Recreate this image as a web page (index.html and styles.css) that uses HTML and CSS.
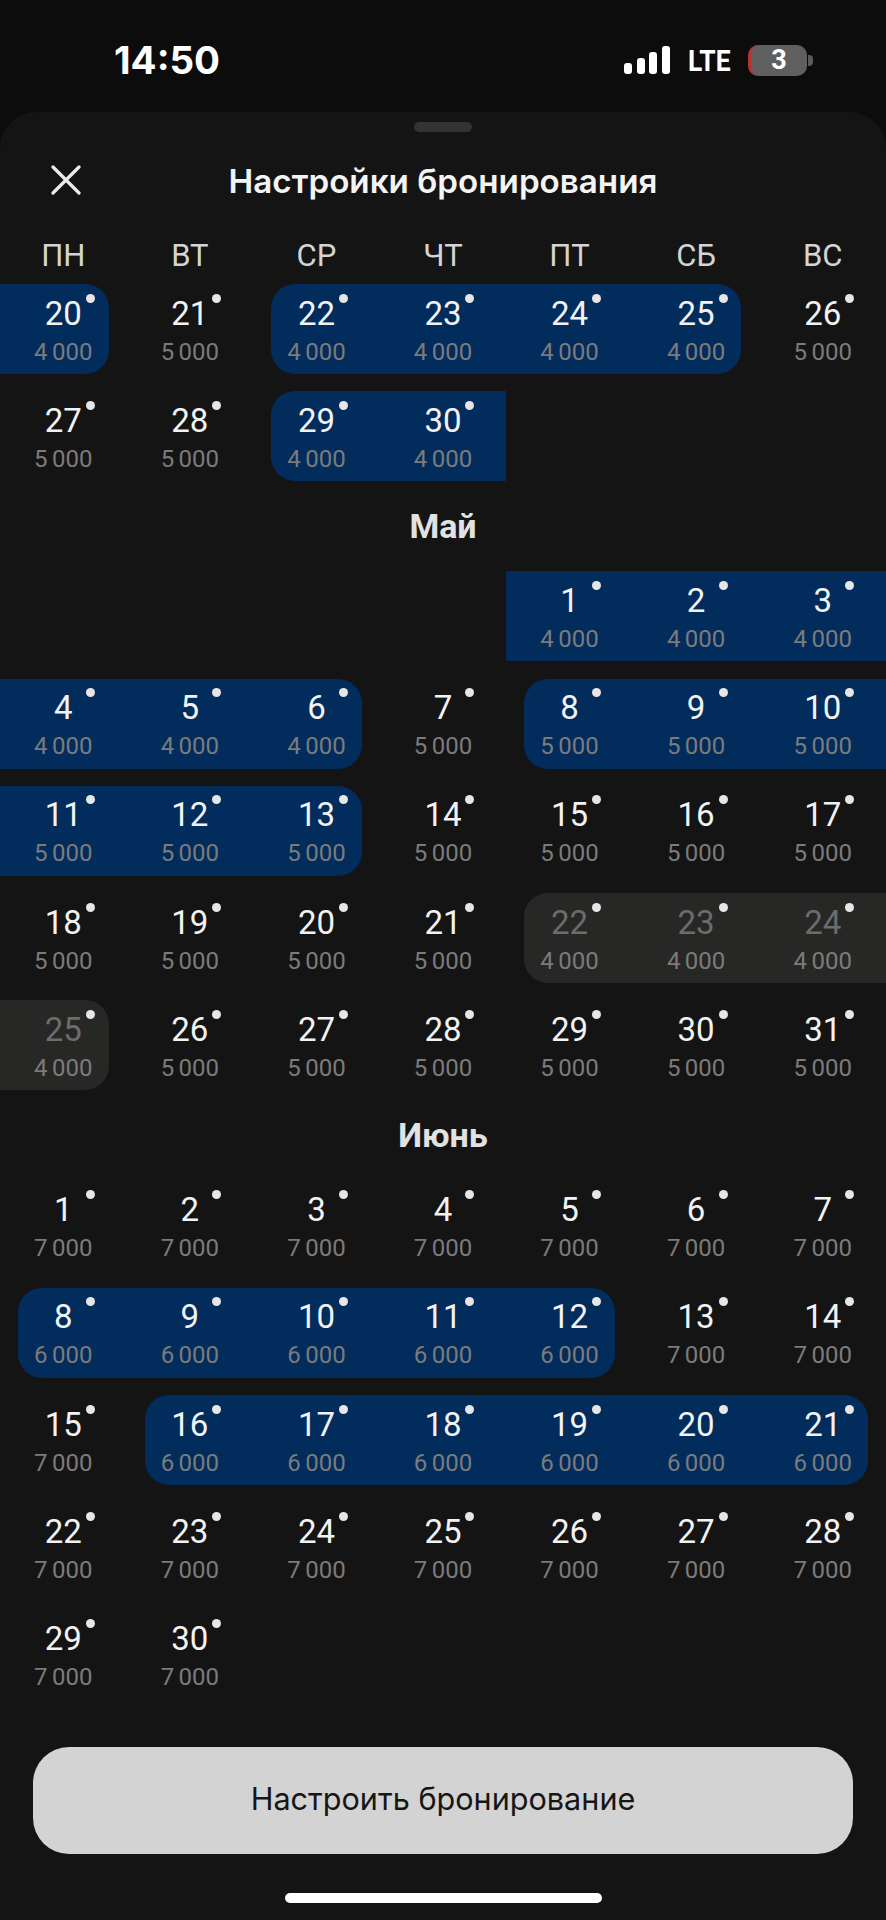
FILE: index.html
```html
<!DOCTYPE html>
<html lang="ru">
<head>
  <meta charset="UTF-8"/>
  <meta name="viewport" content="width=device-width, initial-scale=1.0"/>
  <title>Настройки бронирования</title>
  <link rel="stylesheet" href="styles.css">
</head>
<body>
  <div class="status-bar">
    <div class="time">14:50</div>
    <div class="status-right">
      <div class="signal"><i></i><i></i><i></i><i></i></div>
      <div class="lte">LTE</div>
      <div class="battery"><span>3</span></div>
      <div class="battery-nub"></div>
    </div>
  </div>

  <div class="sheet">
    <div class="handle"></div>

    <div class="sheet-head">
      <svg class="close" width="30" height="30" viewBox="0 0 30 30">
        <path d="M2 2 L28 28 M28 2 L2 28" stroke="#ececec" stroke-width="3.2" fill="none" stroke-linecap="round"/>
      </svg>
      <h1>Настройки бронирования</h1>
    </div>

    <div class="weekdays">
      <div>ПН</div><div>ВТ</div><div>СР</div><div>ЧТ</div><div>ПТ</div><div>СБ</div><div>ВС</div>
    </div>

    <!-- Апрель -->
    <div class="month">
      <div class="cell sel end"><span class="day">20</span><span class="price">4 000</span></div>
      <div class="cell"><span class="day">21</span><span class="price">5 000</span></div>
      <div class="cell sel start"><span class="day">22</span><span class="price">4 000</span></div>
      <div class="cell sel"><span class="day">23</span><span class="price">4 000</span></div>
      <div class="cell sel"><span class="day">24</span><span class="price">4 000</span></div>
      <div class="cell sel end"><span class="day">25</span><span class="price">4 000</span></div>
      <div class="cell"><span class="day">26</span><span class="price">5 000</span></div>
      <div class="cell"><span class="day">27</span><span class="price">5 000</span></div>
      <div class="cell"><span class="day">28</span><span class="price">5 000</span></div>
      <div class="cell sel start"><span class="day">29</span><span class="price">4 000</span></div>
      <div class="cell sel"><span class="day">30</span><span class="price">4 000</span></div>
    </div>

    <h2>Май</h2>
    <div class="month">
      <div class="cell sel from-fri"><span class="day">1</span><span class="price">4 000</span></div>
      <div class="cell sel"><span class="day">2</span><span class="price">4 000</span></div>
      <div class="cell sel"><span class="day">3</span><span class="price">4 000</span></div>
      <div class="cell sel"><span class="day">4</span><span class="price">4 000</span></div>
      <div class="cell sel"><span class="day">5</span><span class="price">4 000</span></div>
      <div class="cell sel end"><span class="day">6</span><span class="price">4 000</span></div>
      <div class="cell"><span class="day">7</span><span class="price">5 000</span></div>
      <div class="cell sel start"><span class="day">8</span><span class="price">5 000</span></div>
      <div class="cell sel"><span class="day">9</span><span class="price">5 000</span></div>
      <div class="cell sel"><span class="day">10</span><span class="price">5 000</span></div>
      <div class="cell sel"><span class="day">11</span><span class="price">5 000</span></div>
      <div class="cell sel"><span class="day">12</span><span class="price">5 000</span></div>
      <div class="cell sel end"><span class="day">13</span><span class="price">5 000</span></div>
      <div class="cell"><span class="day">14</span><span class="price">5 000</span></div>
      <div class="cell"><span class="day">15</span><span class="price">5 000</span></div>
      <div class="cell"><span class="day">16</span><span class="price">5 000</span></div>
      <div class="cell"><span class="day">17</span><span class="price">5 000</span></div>
      <div class="cell"><span class="day">18</span><span class="price">5 000</span></div>
      <div class="cell"><span class="day">19</span><span class="price">5 000</span></div>
      <div class="cell"><span class="day">20</span><span class="price">5 000</span></div>
      <div class="cell"><span class="day">21</span><span class="price">5 000</span></div>
      <div class="cell busy start"><span class="day">22</span><span class="price">4 000</span></div>
      <div class="cell busy"><span class="day">23</span><span class="price">4 000</span></div>
      <div class="cell busy"><span class="day">24</span><span class="price">4 000</span></div>
      <div class="cell busy end"><span class="day">25</span><span class="price">4 000</span></div>
      <div class="cell"><span class="day">26</span><span class="price">5 000</span></div>
      <div class="cell"><span class="day">27</span><span class="price">5 000</span></div>
      <div class="cell"><span class="day">28</span><span class="price">5 000</span></div>
      <div class="cell"><span class="day">29</span><span class="price">5 000</span></div>
      <div class="cell"><span class="day">30</span><span class="price">5 000</span></div>
      <div class="cell"><span class="day">31</span><span class="price">5 000</span></div>
    </div>

    <h2>Июнь</h2>
    <div class="month">
      <div class="cell"><span class="day">1</span><span class="price">7 000</span></div>
      <div class="cell"><span class="day">2</span><span class="price">7 000</span></div>
      <div class="cell"><span class="day">3</span><span class="price">7 000</span></div>
      <div class="cell"><span class="day">4</span><span class="price">7 000</span></div>
      <div class="cell"><span class="day">5</span><span class="price">7 000</span></div>
      <div class="cell"><span class="day">6</span><span class="price">7 000</span></div>
      <div class="cell"><span class="day">7</span><span class="price">7 000</span></div>
      <div class="cell sel start"><span class="day">8</span><span class="price">6 000</span></div>
      <div class="cell sel"><span class="day">9</span><span class="price">6 000</span></div>
      <div class="cell sel"><span class="day">10</span><span class="price">6 000</span></div>
      <div class="cell sel"><span class="day">11</span><span class="price">6 000</span></div>
      <div class="cell sel end"><span class="day">12</span><span class="price">6 000</span></div>
      <div class="cell"><span class="day">13</span><span class="price">7 000</span></div>
      <div class="cell"><span class="day">14</span><span class="price">7 000</span></div>
      <div class="cell"><span class="day">15</span><span class="price">7 000</span></div>
      <div class="cell sel start"><span class="day">16</span><span class="price">6 000</span></div>
      <div class="cell sel"><span class="day">17</span><span class="price">6 000</span></div>
      <div class="cell sel"><span class="day">18</span><span class="price">6 000</span></div>
      <div class="cell sel"><span class="day">19</span><span class="price">6 000</span></div>
      <div class="cell sel"><span class="day">20</span><span class="price">6 000</span></div>
      <div class="cell sel end"><span class="day">21</span><span class="price">6 000</span></div>
      <div class="cell"><span class="day">22</span><span class="price">7 000</span></div>
      <div class="cell"><span class="day">23</span><span class="price">7 000</span></div>
      <div class="cell"><span class="day">24</span><span class="price">7 000</span></div>
      <div class="cell"><span class="day">25</span><span class="price">7 000</span></div>
      <div class="cell"><span class="day">26</span><span class="price">7 000</span></div>
      <div class="cell"><span class="day">27</span><span class="price">7 000</span></div>
      <div class="cell"><span class="day">28</span><span class="price">7 000</span></div>
      <div class="cell"><span class="day">29</span><span class="price">7 000</span></div>
      <div class="cell"><span class="day">30</span><span class="price">7 000</span></div>
    </div>

    <button class="setup-btn">Настроить бронирование</button>
    <div class="home-bar"></div>
  </div>
</body>
</html>
```
FILE: styles.css
```css
* {
  box-sizing: border-box;
  padding: 0;
  margin: 0;
}

body {
  width: 886px;
  height: 1920px;
  overflow: hidden;
  background: #0c0c0c;
  font-family: Roboto, sans-serif;
  color: #f0f0f0;
}

/* status bar */
.status-bar {
  height: 112px;
  padding: 8px 73px 0 114px;
  display: flex;
  justify-content: space-between;
  align-items: center;
}

.time {
  font-family: Inter, sans-serif;
  font-size: 38.5px;
  font-weight: 700;
  color: #fff;
}

.status-right {
  display: flex;
  align-items: center;
}

.signal {
  display: flex;
  align-items: flex-end;
  gap: 4.5px;
  height: 28px;
  margin-right: 18px;
}

.signal i {
  display: block;
  width: 8px;
  border-radius: 3px;
  background: #fff;
}

.signal i:nth-child(1) { height: 11px; }
.signal i:nth-child(2) { height: 16px; }
.signal i:nth-child(3) { height: 22px; }
.signal i:nth-child(4) { height: 28px; }

.lte {
  font-size: 30px;
  font-weight: 700;
  color: #fff;
  margin-right: 12px;
  transform: scaleX(0.88);
  transform-origin: left center;
}

.battery {
  width: 59px;
  height: 31px;
  border-radius: 10px;
  background: #5f5f5f;
  border-left: 3px solid #b8322e;
  display: flex;
  align-items: center;
  justify-content: center;
  font-size: 27px;
  font-weight: 700;
  color: #fff;
}

.battery-nub {
  width: 5px;
  height: 11px;
  margin-left: 1px;
  border-radius: 0 4px 4px 0;
  background: #5a5a5a;
}

/* sheet */
.sheet {
  height: 1808px;
  background: #141414;
  border-radius: 36px 36px 0 0;
  overflow: hidden;
}

.handle {
  width: 58px;
  height: 10px;
  margin: 10px auto 0;
  border-radius: 5px;
  background: #333;
}

.sheet-head {
  height: 72px;
  margin-top: 13px;
  display: grid;
  grid-template-columns: 1fr auto 1fr;
  align-items: center;
}

.close {
  margin-left: 51px;
  margin-bottom: 3px;
}

h1 {
  font-family: Inter, sans-serif;
  font-size: 33.2px;
  font-weight: 600;
  color: #f4f4f4;
}

.weekdays {
  height: 58px;
  margin-top: 9px;
  display: grid;
  grid-template-columns: repeat(7, 1fr);
  align-items: center;
  text-align: center;
  font-size: 31px;
  color: #d4d4d4;
}

h2 {
  height: 90px;
  line-height: 90px;
  text-align: center;
  font-size: 34px;
  font-weight: 700;
  color: #e2e2e2;
}

/* calendar */
.month {
  display: grid;
  grid-template-columns: repeat(7, 1fr);
  grid-auto-rows: 90px;
  row-gap: 17.3px;
}

.from-fri {
  grid-column-start: 5;
}

.cell {
  display: flex;
  flex-direction: column;
  align-items: center;
  padding-top: 10.5px;
}

.day {
  position: relative;
  width: 90px;
  text-align: center;
  font-size: 33px;
  line-height: 38px;
  color: #f2f2f2;
}

.day::after {
  content: "";
  position: absolute;
  left: 67.5px;
  top: -1px;
  width: 9px;
  height: 9px;
  border-radius: 50%;
  background: #e6e6e6;
}

.price {
  margin-top: 4px;
  font-size: 24px;
  line-height: 30px;
  word-spacing: -1.5px;
  color: #7b7b7b;
}

.sel {
  background: #022c5c;
}

.busy {
  background: #272726;
}

.busy .day {
  color: #6c6c6c;
}

.start {
  margin-left: 18px;
  padding-right: 18px;
  border-radius: 24px 0 0 24px;
}

.end {
  margin-right: 18px;
  padding-left: 18px;
  border-radius: 0 24px 24px 0;
}

/* bottom */
.setup-btn {
  display: block;
  width: 820px;
  height: 107px;
  margin: 47px auto 0;
  padding-bottom: 4px;
  border: none;
  border-radius: 36px;
  background: #d3d3d3;
  color: #161616;
  font-family: Inter, sans-serif;
  font-size: 30.6px;
}

.home-bar {
  width: 317px;
  height: 10px;
  margin: 39px auto 0;
  border-radius: 5px;
  background: #fff;
}
```
